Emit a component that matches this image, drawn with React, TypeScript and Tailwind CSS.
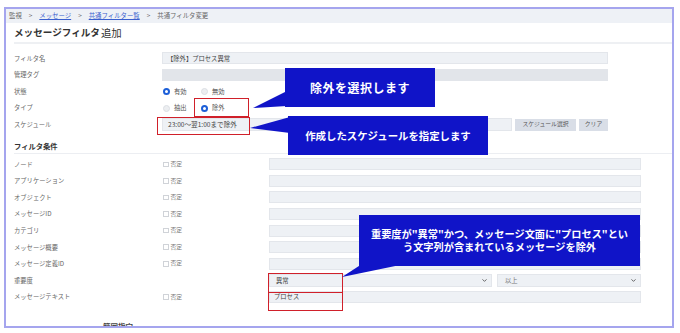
import React from 'react';
import {ChevronDown} from 'lucide-react';

function Radio({checked}: {checked?: boolean}) {
  return checked ? (
    <span className="w-[7px] h-[7px] rounded-full border-2 border-[#1d5fd8] bg-white"/>
  ) : (
    <span className="w-[7px] h-[7px] rounded-full border border-[#dcdfe4] bg-[#eceef1]"/>
  );
}

function Row({label, children}: {label: string, children?: React.ReactNode}) {
  return (
    <div className="h-[16.6px] flex items-center">
      <div className="w-[156px] pl-[8px] text-[6.3px] text-[#666]">{label}</div>
      {children}
    </div>
  );
}

function FilterRow({label, negate = true, children}: {label: string, negate?: boolean, children?: React.ReactNode}) {
  return (
    <div className="h-[16.6px] flex items-center">
      <div className="w-[156px] pl-[8px] text-[6.3px] text-[#666]">{label}</div>
      <div className="w-[107px] flex items-center gap-[2px] pl-[1px]">
        {negate && (
          <>
            <span className="w-[5.5px] h-[5.5px] border border-[#d0d3d8] bg-white"/>
            <span className="text-[5.8px] text-[#777]">否定</span>
          </>
        )}
      </div>
      {children ?? <div className="w-[372px] h-[12px] bg-[#eef1f5] border border-[#e3e6eb]"/>}
    </div>
  );
}

export default function App() {
  return (
    <div className="relative w-[680px] h-[333px] bg-white overflow-hidden font-['Noto_Sans_CJK_JP',sans-serif]">
      {/* frame */}
      <div className="ml-[4px] mt-[7px] w-[670px] h-[321px] border-2 border-[#a5a5ee] overflow-hidden flex flex-col">
        <div className="h-[14px] shrink-0 bg-[#eef1f6] flex items-center pl-[3px] text-[6.4px] text-[#666]">
          <span>監視</span>
          <span className="mx-[7px]">&gt;</span>
          <span className="text-[#3a5fcf] underline">メッセージ</span>
          <span className="mx-[7px]">&gt;</span>
          <span className="text-[#3a5fcf] underline">共通フィルター覧</span>
          <span className="mx-[7px]">&gt;</span>
          <span>共通フィルタ変更</span>
        </div>

        <div className="h-[19px] shrink-0 flex items-center pl-[8px] text-[#333]">
          <span className="text-[9.6px] font-bold">メッセージフィルタ</span>
          <span className="text-[10.4px] ml-[1px]">追加</span>
        </div>
        <div className="ml-[8px] h-[2px] shrink-0 bg-[#eef0f3]"/>

        <div className="mt-[6px] shrink-0">
          <Row label="フィルタ名">
            <div className="w-[446px] h-[12px] bg-[#eef1f5] border border-[#e3e6eb] flex items-center pl-[4px] text-[6.3px] text-[#444]">
              【除外】プロセス異常
            </div>
          </Row>
          <Row label="管理タグ">
            <div className="w-[446px] h-[12px] bg-[#e2e5ea]"/>
          </Row>
          <Row label="状態">
            <div className="flex items-center text-[6.3px] text-[#555] pl-[1px]">
              <Radio checked/>
              <span className="ml-[4px] w-[27px]">有効</span>
              <Radio/>
              <span className="ml-[4px]">無効</span>
            </div>
          </Row>
          <Row label="タイプ">
            <div className="flex items-center text-[6.3px] text-[#555] pl-[1px]">
              <Radio/>
              <span className="ml-[4px] w-[27px]">抽出</span>
              <Radio checked/>
              <span className="ml-[4px]">除外</span>
            </div>
          </Row>
          <Row label="スケジュール">
            <div className="w-[350px] h-[13px] bg-[#eef1f5] border border-[#e3e6eb] flex items-center pl-[5px] text-[6.6px] text-[#444]">
              23:00～翌1:00まで除外
            </div>
            <div className="ml-[3px] w-[61px] h-[12px] bg-[#d9dee7] flex items-center justify-center text-[5.8px] text-[#555]">
              スケジュール選択
            </div>
            <div className="ml-[3px] w-[29px] h-[12px] bg-[#d9dee7] flex items-center justify-center text-[5.8px] text-[#555]">
              クリア
            </div>
          </Row>
        </div>

        <div className="mt-[7px] h-[13px] shrink-0 flex items-center pl-[8px] text-[7.3px] font-bold text-[#333]">
          フィルタ条件
        </div>
        <div className="ml-[8px] h-[1px] shrink-0 bg-[#eceef2]"/>

        <div className="mt-[2px] shrink-0">
          <FilterRow label="ノード"/>
          <FilterRow label="アプリケーション"/>
          <FilterRow label="オブジェクト"/>
          <FilterRow label="メッセージID"/>
          <FilterRow label="カテゴリ"/>
          <FilterRow label="メッセージ概要"/>
          <FilterRow label="メッセージ定義ID"/>
          <FilterRow label="重要度" negate={false}>
            <div className="w-[223px] h-[13px] bg-[#eef1f5] border border-[#e3e6eb] flex items-center justify-between pl-[6px] pr-[3px] text-[6.3px] text-[#444]">
              <span>異常</span>
              <ChevronDown size={7} strokeWidth={3} className="text-[#555]"/>
            </div>
            <div className="ml-[5px] w-[144px] h-[13px] bg-[#eef1f5] border border-[#e3e6eb] flex items-center justify-between pl-[7px] pr-[3px] text-[6.3px] text-[#777]">
              <span>以上</span>
              <ChevronDown size={7} strokeWidth={3} className="text-[#555]"/>
            </div>
          </FilterRow>
          <FilterRow label="メッセージテキスト">
            <div className="w-[372px] h-[12px] bg-[#eef1f5] border border-[#e3e6eb] flex items-center pl-[4px] text-[6.3px] text-[#444]">
              プロセス
            </div>
          </FilterRow>
        </div>

        {/* partly hidden by the frame's bottom edge, as in the screenshot */}
        <div className="mt-[17px] pl-[97px] text-[7.5px] font-bold text-[#444] leading-[10px] shrink-0">
          範囲指定
        </div>
      </div>

      {/* red highlight boxes */}
      <div className="absolute left-[194px] top-[98px] w-[55px] h-[19px] border-[1.5px] border-[#d0202a]"/>
      <div className="absolute left-[157px] top-[117px] w-[93px] h-[18px] border-[1.5px] border-[#d0202a]"/>
      <div className="absolute left-[268px] top-[273px] w-[75px] h-[20px] border-[1.5px] border-[#d0202a]"/>
      <div className="absolute left-[268px] top-[291.5px] w-[75px] h-[19px] border-[1.5px] border-[#d0202a]"/>

      {/* callout tails */}
      <svg className="absolute left-0 top-0 pointer-events-none" width="680" height="333">
        <polygon points="287,91 253,108 287,106" fill="#1014c8"/>
        <polygon points="290,117 250,128 290,133" fill="#1014c8"/>
        <polygon points="362,264 342,277 405,264" fill="#1014c8"/>
      </svg>

      {/* callouts */}
      <div className="absolute left-[285px] top-[68px] w-[150px] h-[39px] bg-[#1014c8] flex items-center justify-center text-white text-[12px] font-semibold tracking-[0.5px]">
        除外を選択します
      </div>
      <div className="absolute left-[288px] top-[116px] w-[200px] h-[39px] bg-[#1014c8] flex items-center justify-center text-white text-[10.4px] font-semibold">
        作成したスケジュールを指定します
      </div>
      <div className="absolute left-[359px] top-[215px] w-[281px] h-[51px] bg-[#1014c8] flex flex-col items-center justify-center gap-[1px] text-white text-[10.2px] font-semibold leading-[12.5px] whitespace-nowrap">
        <span>重要度が"異常"かつ、メッセージ文面に"プロセス"とい</span>
        <span>う文字列が含まれているメッセージを除外</span>
      </div>
    </div>
  );
}
